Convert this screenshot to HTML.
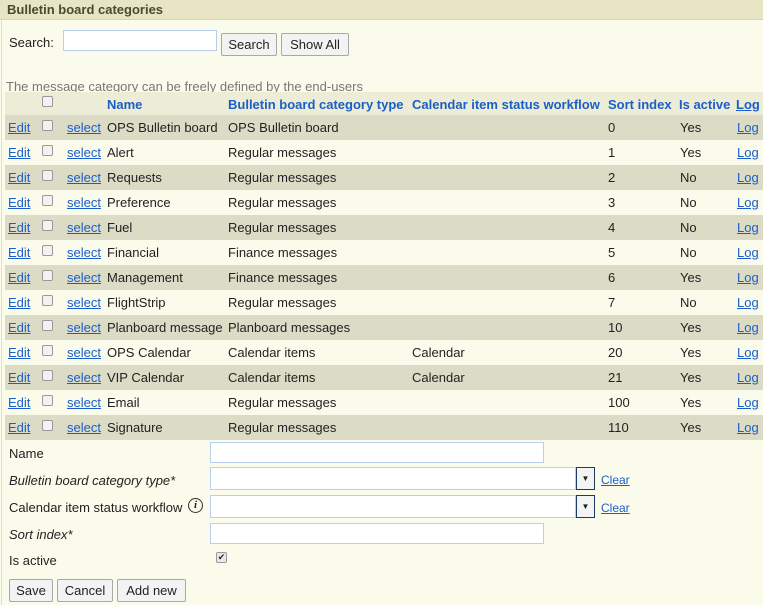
<!DOCTYPE html><html><head><style>
body{margin:0;width:763px;height:605px;background:#fbfbeb;font-family:"Liberation Sans",sans-serif;font-size:13px;color:#222;position:relative;overflow:hidden}
.a{position:absolute;white-space:nowrap}
.t{left:0;top:0;width:763px;height:20px;background:#e7e5c3;border-bottom:1px solid #d6d4b0;font-weight:bold;color:#4a4a30;font-size:13px;line-height:20px;padding-left:7px;box-sizing:border-box}
.lb{left:1px;top:20px;width:1px;height:585px;background:#e2e0c0}
.inp{background:#fff;border:1px solid #b8d0ee;box-sizing:border-box}
.btn{background:#f3f3f3;border:1px solid #a8a8a8;box-sizing:border-box;text-align:center;color:#222;border-radius:2px}
a{color:#1a5fc9;text-decoration:underline}
.hd{color:#1a5fc9;font-weight:bold}
.row{left:5px;width:758px;height:25px}
.cb{width:11px;height:11px;border:1px solid #999;background:#f2f2f2;border-radius:2px;box-sizing:border-box}
</style></head><body>
<div class="a t">Bulletin board categories</div>
<div class="a lb"></div>
<div class="a" style="left:9px;top:35px">Search:</div>
<div class="a inp" style="left:63px;top:30px;width:154px;height:21px"></div>
<div class="a btn" style="left:221px;top:33px;width:56px;height:23px;line-height:21px">Search</div>
<div class="a btn" style="left:281px;top:33px;width:68px;height:23px;line-height:21px">Show All</div>
<div class="a" style="left:6px;top:79px;color:#777">The message category can be freely defined by the end-users</div>
<div class="a row" style="top:92px;height:23px;background:#edecd6"></div>
<div class="a cb" style="left:42px;top:96px"></div>
<div class="a hd" style="left:107px;top:97px">Name</div>
<div class="a hd" style="left:228px;top:97px">Bulletin board category type</div>
<div class="a hd" style="left:412px;top:97px">Calendar item status workflow</div>
<div class="a hd" style="left:608px;top:97px">Sort index</div>
<div class="a hd" style="left:679px;top:97px">Is active</div>
<div class="a hd" style="left:736px;top:97px"><a style="color:#1a5fc9">Log</a></div>
<div id="rows"></div>
<script>
var d=[["OPS Bulletin board","OPS Bulletin board","","0","Yes"],["Alert","Regular messages","","1","Yes"],["Requests","Regular messages","","2","No"],["Preference","Regular messages","","3","No"],["Fuel","Regular messages","","4","No"],["Financial","Finance messages","","5","No"],["Management","Finance messages","","6","Yes"],["FlightStrip","Regular messages","","7","No"],["Planboard message","Planboard messages","","10","Yes"],["OPS Calendar","Calendar items","Calendar","20","Yes"],["VIP Calendar","Calendar items","Calendar","21","Yes"],["Email","Regular messages","","100","Yes"],["Signature","Regular messages","","110","Yes"]];
var h="";d.forEach(function(r,i){var y=115+i*25;h+='<div class="a row" style="top:'+y+'px;background:'+(i%2?'#fbfbec':'#dcdbc6')+'"></div>'+
'<a class="a" style="left:8px;top:'+(y+5)+'px">Edit</a><div class="a cb" style="left:42px;top:'+(y+5)+'px"></div><a class="a" style="left:67px;top:'+(y+5)+'px">select</a>'+
'<div class="a" style="left:107px;top:'+(y+5)+'px">'+r[0]+'</div><div class="a" style="left:228px;top:'+(y+5)+'px">'+r[1]+'</div><div class="a" style="left:412px;top:'+(y+5)+'px">'+r[2]+'</div><div class="a" style="left:608px;top:'+(y+5)+'px">'+r[3]+'</div><div class="a" style="left:680px;top:'+(y+5)+'px">'+r[4]+'</div><a class="a" style="left:737px;top:'+(y+5)+'px">Log</a>';});
document.getElementById("rows").innerHTML=h;
</script>
<div class="a" style="left:9px;top:446px">Name</div>
<div class="a inp" style="left:210px;top:442px;width:334px;height:21px"></div>
<div class="a" style="left:9px;top:473px;font-style:italic">Bulletin board category type*</div>
<div class="a inp" style="left:210px;top:467px;width:366px;height:23px"></div>
<div class="a" style="left:576px;top:467px;width:19px;height:23px;border:1px solid #1e3a66;box-sizing:border-box;background:#f4f4f4;font-size:8px;text-align:center;line-height:21px">&#9660;</div>
<a class="a" style="left:601px;top:473px;font-size:12px">Clear</a>
<div class="a" style="left:9px;top:500px">Calendar item status workflow</div>
<div class="a" style="left:188px;top:498px;width:15px;height:15px;border:1.5px solid #333;border-radius:50%;box-sizing:border-box;font:italic bold 11px 'Liberation Serif',serif;text-align:center;line-height:13px">i</div>
<div class="a inp" style="left:210px;top:495px;width:366px;height:23px"></div>
<div class="a" style="left:576px;top:495px;width:19px;height:23px;border:1px solid #1e3a66;box-sizing:border-box;background:#f4f4f4;font-size:8px;text-align:center;line-height:21px">&#9660;</div>
<a class="a" style="left:601px;top:501px;font-size:12px">Clear</a>
<div class="a" style="left:9px;top:527px;font-style:italic">Sort index*</div>
<div class="a inp" style="left:210px;top:523px;width:334px;height:21px"></div>
<div class="a" style="left:9px;top:553px">Is active</div>
<div class="a cb" style="left:216px;top:552px;font-size:9px;line-height:9px;text-align:center;background:#e8e8e8">&#10004;</div>
<div class="a btn" style="left:9px;top:579px;width:44px;height:23px;line-height:21px">Save</div>
<div class="a btn" style="left:57px;top:579px;width:56px;height:23px;line-height:21px">Cancel</div>
<div class="a btn" style="left:117px;top:579px;width:69px;height:23px;line-height:21px">Add new</div>
</body></html>
